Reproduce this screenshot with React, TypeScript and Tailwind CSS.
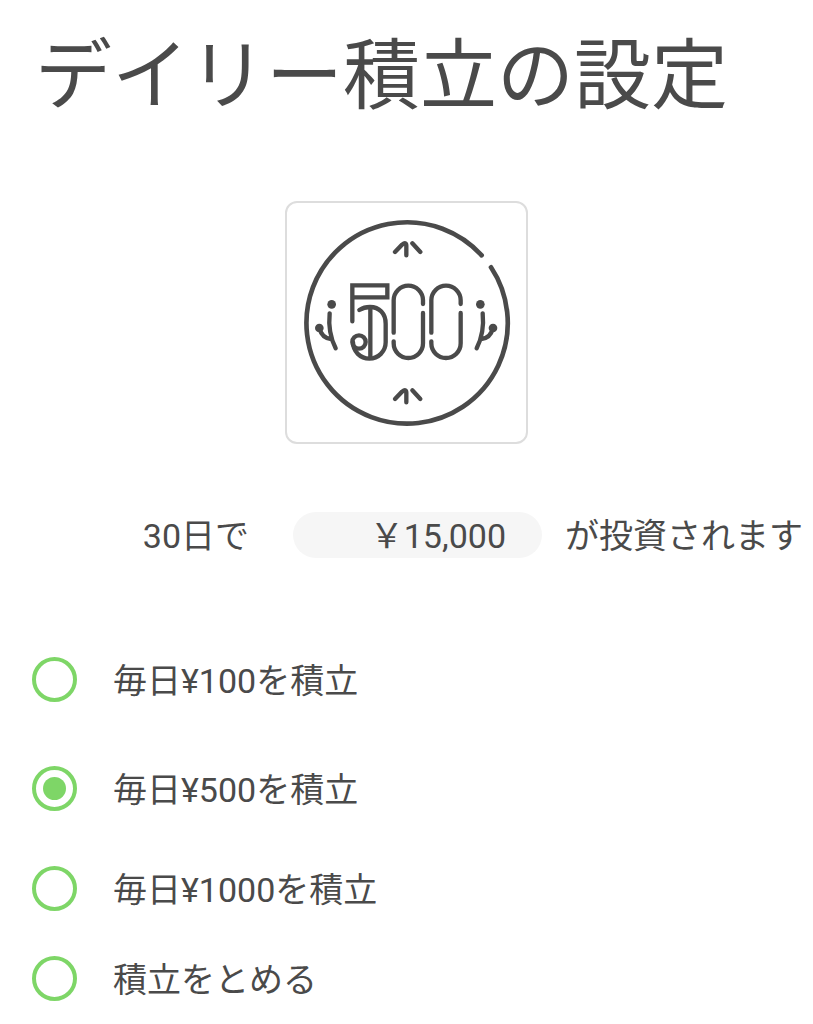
import { useState } from 'react';

type Plan = {
  id: string;
  label: string;
  monthlyTotal: string;
  spacing: string;
};

const plans: Plan[] = [
  { id: 'daily-100', label: '毎日¥100を積立', monthlyTotal: '3,000', spacing: '' },
  { id: 'daily-500', label: '毎日¥500を積立', monthlyTotal: '15,000', spacing: 'mt-[63px]' },
  { id: 'daily-1000', label: '毎日¥1000を積立', monthlyTotal: '30,000', spacing: 'mt-[54px]' },
  { id: 'stop', label: '積立をとめる', monthlyTotal: '0', spacing: 'mt-11' },
];

// full-width yen sign
const YEN = '\uffe5';

function CoinIcon() {
  return (
    <svg
      viewBox="21 24 717 717"
      className="h-full w-full"
      fill="none"
      stroke="currentColor"
      strokeWidth="13"
      strokeLinecap="round"
      strokeLinejoin="miter"
      aria-hidden
    >
      {/* rim, open at the upper right */}
      <path d="M605 181A302 302 0 1 0 633 217" strokeWidth="14" />

      {/* sprouts */}
      <path d="M345 171L366 149Q379 139 379 152V181M397 145L421 171" />
      <path d="M345 612L366 590Q379 580 379 593V622M397 586L421 612" />

      {/* 5 */}
      <path d="M217 379V271H322V307H217" />
      <path d="M238 345C252 336 262 336 270 336C298 336 317 356 317 386V442A49 49 0 0 1 219 442" />
      <circle cx="237" cy="441" r="20" />
      <path d="M271 338V488" />

      {/* zeros */}
      <path d="M341 413V316A44 44 0 0 1 429 316V327M429 354V445A44 44 0 0 1 341 445V439" />
      <path d="M454 413V316A44 44 0 0 1 542 316V327M542 354V445A44 44 0 0 1 454 445V439" />

      {/* branches */}
      <path d="M149 355Q143 413 167 460M118 399Q126 430 153 432" />
      <path d="M608 355Q614 413 590 460M639 399Q631 430 604 432" />
      <g fill="currentColor" stroke="none">
        <circle cx="155" cy="328" r="13" />
        <circle cx="118" cy="399" r="13" />
        <circle cx="601" cy="328" r="13" />
        <circle cx="639" cy="399" r="13" />
      </g>
    </svg>
  );
}

export default function App() {
  const [selectedId, setSelectedId] = useState('daily-500');
  const selected = plans.find((p) => p.id === selectedId) ?? plans[0];

  return (
    <main className="min-h-screen bg-white font-[Roboto,'Noto_Sans_CJK_JP',sans-serif] text-[#4a4a4a]">
      <h1
        id="plan-heading"
        className="px-[35px] pt-7 text-[77px] leading-[98px] font-normal whitespace-nowrap"
      >
        デイリー積立の設定
      </h1>

      <div className="mx-auto mt-[75px] size-[243px] rounded-xl border-2 border-[#dddddd]">
        <CoinIcon />
      </div>

      <div className="mt-[67px] flex items-center justify-end pr-2.5 text-[34px] leading-[46px] whitespace-nowrap">
        <span className="pt-0.5">30日で</span>
        <output className="mr-[23px] ml-11 h-[46px] w-[249px] rounded-full bg-[#f6f6f6] pt-px pr-9 text-right">
          {YEN}
          {selected.monthlyTotal}
        </output>
        <span className="pt-0.5">が投資されます</span>
      </div>

      <div
        role="radiogroup"
        aria-labelledby="plan-heading"
        className="mt-[97px] px-8 text-[34px] leading-[46px]"
      >
        {plans.map((plan) => (
          <div key={plan.id} className={`flex h-[46px] items-center ${plan.spacing}`}>
            <input
              id={plan.id}
              type="radio"
              name="plan"
              value={plan.id}
              checked={plan.id === selectedId}
              onChange={() => setSelectedId(plan.id)}
              className="size-[45px] shrink-0 appearance-none rounded-full border-4 border-[#7ed667] bg-clip-content p-[7px] checked:bg-[#7ed667]"
            />
            <label htmlFor={plan.id} className="cursor-pointer pt-1 pl-9 whitespace-nowrap">
              {plan.label}
            </label>
          </div>
        ))}
      </div>
    </main>
  );
}
